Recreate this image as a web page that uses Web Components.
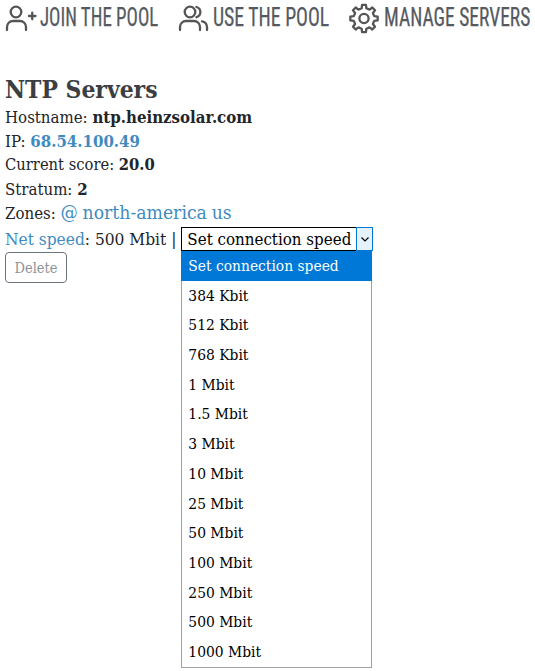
<!DOCTYPE html>
<html>
<head>
<meta charset="utf-8">
<title>NTP Servers</title>
<style>
  html, body { margin: 0; background: #fff; }
  body { min-height: 671px; font-family: "DejaVu Serif Condensed", "DejaVu Serif", serif; color: #212529; }
</style>
</head>
<body>
<pool-nav>
  <nav-link icon="join" text-width="118" squeeze="0.755">JOIN THE POOL</nav-link>
  <nav-link icon="use" text-width="116" squeeze="0.79">USE THE POOL</nav-link>
  <nav-link icon="manage" text-width="145" squeeze="0.78">MANAGE SERVERS</nav-link>
</pool-nav>
<server-info
  hostname="ntp.heinzsolar.com"
  ip="68.54.100.49"
  score="20.0"
  stratum="2"
  zones="@,north-america,us"
  speed="500 Mbit">
</server-info>
<script>
// 8 rounded teeth, one pointing straight up
function gearPath() {
  const at = (deg, r) => {
    const a = (deg - 90) * Math.PI / 180;
    return (15 + r * Math.cos(a)).toFixed(2) + " " + (15 + r * Math.sin(a)).toFixed(2);
  };
  let d = "";
  for (let i = 0; i < 8; i++) {
    const c = i * 45;
    d += (i ? "L" : "M") + at(c - 13, 10.500) + "L" + at(c - 8, 13.800) + "L" + at(c + 8, 13.800) + "L" + at(c + 13, 10.500);
  }
  return d + "Z";
}

const ICONS = {
  join: `<circle cx="11" cy="10" r="5.300"/><path d="M2 28v-3a6 6 0 0 1 6-6h7a6 6 0 0 1 6 6v3"/><path d="M24 14h6.500M27.250 10.750v6.500"/>`,
  use: `<circle cx="12" cy="10" r="5.300"/><path d="M2 28v-3a6 6 0 0 1 6-6h8a6 6 0 0 1 6 6v3"/><path d="M18.500 5a5.300 5.300 0 0 1 0 10.200M24 19.300a6 6 0 0 1 5 5.700v3"/>`,
  manage: `<g transform="translate(0 1.500)"><circle cx="15" cy="15" r="4.600"/><path d="${gearPath()}"/></g>`
};

const navTemplate = document.createElement("template");
navTemplate.innerHTML = `
  <style>
    :host {
      display: flex;
      gap: 20px;
      padding: 0 0 0 5px;
      height: 36px;
      align-items: center;
      white-space: nowrap;
      overflow: hidden;
    }
  </style>
  <slot></slot>
`;

class PoolNav extends HTMLElement {
  constructor() {
    super();
    this.attachShadow({ mode: "open" });
    this.shadowRoot.appendChild(navTemplate.content.cloneNode(true));
  }
}
customElements.define("pool-nav", PoolNav);

class NavLink extends HTMLElement {
  constructor() {
    super();
    this.attachShadow({ mode: "open" });
    this.shadowRoot.innerHTML = `
      <style>
        :host {
          display: inline-flex;
          align-items: center;
          gap: 5px;
          color: #555a60;
          font-family: "Liberation Sans Narrow", "Roboto Condensed", "Liberation Sans", sans-serif;
          font-size: 25px;
          line-height: 32px;
          -webkit-text-stroke: 0.25px #555a60;
        }
        svg { width: 30px; height: 32px; flex: none; overflow: visible; fill: none; stroke: #555; stroke-width: 2.300; stroke-linecap: round; stroke-linejoin: round; }
        .text { display: block; width: ${this.getAttribute("text-width")}px; }
        .squeeze { display: inline-block; transform: scaleX(${this.getAttribute("squeeze")}); transform-origin: 0 50%; }
      </style>
      <svg viewBox="0 0 30 32">${ICONS[this.getAttribute("icon")]}</svg>
      <span class="text"><span class="squeeze"><slot></slot></span></span>
    `;
  }
}
customElements.define("nav-link", NavLink);

class SpeedPicker extends HTMLElement {
  constructor() {
    super();
    this.attachShadow({ mode: "open" });
    const options = ["384 Kbit", "512 Kbit", "768 Kbit", "1 Mbit", "1.5 Mbit", "3 Mbit", "10 Mbit", "25 Mbit", "50 Mbit", "100 Mbit", "250 Mbit", "500 Mbit", "1000 Mbit"];
    this.shadowRoot.innerHTML = `
      <style>
        :host { display: inline-block; position: relative; width: 192px; height: 24px; vertical-align: top; }
        .box { box-sizing: border-box; height: 24px; border: 1px solid #000; display: flex; background: #fff; font-size: 16.800px; line-height: 22px; color: #000; }
        .label { flex: 1; padding-left: 5px; white-space: nowrap; overflow: hidden; }
        .arrow { width: 17px; background: #e5f1fb; box-sizing: border-box; display: flex; align-items: center; justify-content: center; border: 1px solid #0078d7; margin: -1px -1px -1px 0; height: 24px; }
        .arrow svg { width: 8px; height: 5px; fill: none; stroke: #000; stroke-width: 1.200; }
        ul { position: absolute; top: 24px; left: 0; width: 191px; height: 417px; box-sizing: border-box; margin: 0; padding: 0; list-style: none; background: #fff; border: 1px solid #a0a0a0; border-top: 0; font-size: 15.400px; color: #000; display: flex; flex-direction: column; }
        li { flex: 1; padding-left: 6px; display: flex; align-items: center; white-space: nowrap; }
        li.on { background: #0078d7; color: #fff; margin: 0 -1px; padding-left: 7px; }
      </style>
      <div class="box"><span class="label">Set connection speed</span><span class="arrow"><svg viewBox="0 0 8 5"><path d="M.5.5 4 4 7.500.5"/></svg></span></div>
      <ul>
        <li class="on">Set connection speed</li>
        ${options.map((o) => `<li>${o}</li>`).join("")}
      </ul>
    `;
  }
}
customElements.define("speed-picker", SpeedPicker);

class ServerInfo extends HTMLElement {
  constructor() {
    super();
    this.attachShadow({ mode: "open" });
  }

  connectedCallback() {
    const zones = this.getAttribute("zones").split(",");
    this.shadowRoot.innerHTML = `
      <style>
        :host { display: block; padding: 38px 5px 0; font-size: 16.700px; line-height: 24px; color: #212529; }
        h1 { margin: 0; font-size: 24.400px; line-height: 31px; font-weight: 700; color: #3b3f43; }
        .row { height: 24px; white-space: nowrap; }
        b { font-weight: 700; }
        a { color: #3f8bc0; text-decoration: none; }
        .score { font-size: 16.400px; }
        .zones a { font-size: 19.200px; }
        .speed { font-size: 17.200px; display: flex; gap: 5px; margin-top: 2px; }
        button { display: block; margin-top: 1px; width: 62px; height: 31px; box-sizing: border-box; padding: 0; background: #fff; border: 1px solid #6c757d; border-radius: 4px; color: #8b9299; font: inherit; font-size: 14.500px; }
      </style>
      <h1>NTP Servers</h1>
      <div class="row">Hostname: <b>${this.getAttribute("hostname")}</b></div>
      <div class="row">IP: <a href="#"><b>${this.getAttribute("ip")}</b></a></div>
      <div class="row score">Current score: <b>${this.getAttribute("score")}</b></div>
      <div class="row">Stratum: <b>${this.getAttribute("stratum")}</b></div>
      <div class="row zones">Zones: ${zones.map((z) => `<a href="#">${z}</a>`).join(" ")}</div>
      <div class="row speed"><span><a href="#">Net speed</a>: ${this.getAttribute("speed")} |</span><speed-picker></speed-picker></div>
      <button disabled>Delete</button>
    `;
  }
}
customElements.define("server-info", ServerInfo);
</script>
</body>
</html>
